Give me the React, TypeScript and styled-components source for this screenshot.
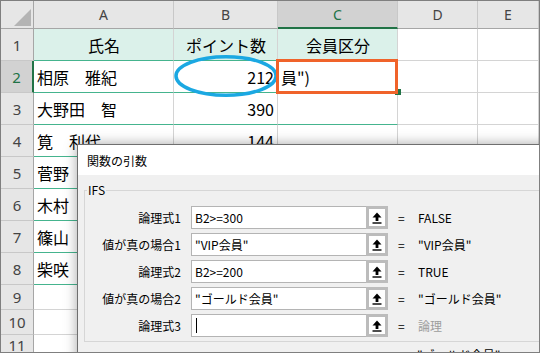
import React from 'react';
import styled, { createGlobalStyle } from 'styled-components';

const GlobalStyle = createGlobalStyle`
  html, body { margin: 0; padding: 0; background: #fff; }
  body {
    font-family: "Noto Sans CJK JP", "Noto Sans", sans-serif;
    overflow: hidden;
  }
`;

const Frame = styled.div`
  position: relative;
  width: 540px;
  height: 353px;
  box-sizing: border-box;
  border: 1px solid #7f7f7f;
  overflow: hidden;
  background: #fff;
`;

const Sheet = styled.div`
  display: grid;
  grid-template-columns: 33px 140px 104px 120px 80px 1fr;
  grid-template-rows: 28px repeat(8, 32px) 25px 25px 1fr;
  height: 100%;
`;

const Corner = styled.div`
  position: relative;
  box-sizing: border-box;
  background: #e6e6e6;
  border-right: 1px solid #a6a6a6;
  border-bottom: 1px solid #a6a6a6;

  &::after {
    content: '';
    position: absolute;
    right: 2px;
    bottom: 2px;
    width: 0;
    height: 0;
    border-left: 17px solid transparent;
    border-bottom: 17px solid #b4b4b4;
  }
`;

const ColHead = styled.div<{ $selected?: boolean }>`
  box-sizing: border-box;
  display: flex;
  align-items: center;
  justify-content: center;
  font-family: "Noto Sans", sans-serif;
  font-size: 14px;
  color: ${(p) => (p.$selected ? '#217346' : '#444')};
  background: ${(p) => (p.$selected ? '#d2d2d2' : '#e6e6e6')};
  border-right: 1px solid #c8c8c8;
  border-bottom: ${(p) => (p.$selected ? '2px solid #217346' : '1px solid #a6a6a6')};
`;

const RowHead = styled.div<{ $selected?: boolean }>`
  box-sizing: border-box;
  display: flex;
  align-items: center;
  justify-content: center;
  font-family: "Noto Sans", sans-serif;
  font-size: 15px;
  color: ${(p) => (p.$selected ? '#217346' : '#444')};
  background: ${(p) => (p.$selected ? '#d2d2d2' : '#e6e6e6')};
  border-right: ${(p) => (p.$selected ? '2px solid #217346' : '1px solid #a6a6a6')};
  border-bottom: 1px solid #c8c8c8;
`;

const Cell = styled.div<{ $head?: boolean; $table?: boolean; $align?: 'left' | 'right' | 'center' }>`
  box-sizing: border-box;
  display: flex;
  align-items: center;
  justify-content: ${(p) => (p.$align === 'right' ? 'flex-end' : p.$align === 'center' ? 'center' : 'flex-start')};
  padding: 0 3px 0 ${(p) => (p.$align === 'left' ? '3px' : '4px')};
  font-size: 16px;
  color: #000;
  white-space: nowrap;
  background: ${(p) => (p.$head ? '#dbf1ea' : '#fff')};
  border-right: 1px solid #d4d4d4;
  border-bottom: 1px solid ${(p) => (p.$table ? '#45b48e' : '#d4d4d4')};
`;

const Ellipse = styled.svg`
  position: absolute;
  left: 173px;
  top: 54px;
`;

const FillHandle = styled.div`
  position: absolute;
  left: 394px;
  top: 88px;
  width: 6px;
  height: 6px;
  background: #217346;
`;

const ActiveCell = styled.div`
  position: absolute;
  left: 275px;
  top: 58px;
  width: 122px;
  height: 35px;
  box-sizing: border-box;
  border: 3px solid #f0632a;
`;

const Dialog = styled.div`
  position: absolute;
  left: 76px;
  top: 143px;
  width: 480px;
  height: 240px;
  border: 1px solid #6f6f6f;
  background: #f0f0f0;
  box-shadow: 0 0 12px rgba(0, 0, 0, 0.35);
  font-size: 12px;
  color: #000;
`;

const TitleBar = styled.div`
  height: 30px;
  display: flex;
  align-items: center;
  padding-left: 9px;
  background: #fff;
`;

const Body = styled.div`
  padding: 8px 0 0 6px;
`;

const GroupBox = styled.fieldset`
  margin: 0;
  padding: 9px 0 4px 0;
  min-width: 0;
  border: 1px solid #d6d6d6;
`;

const Legend = styled.legend`
  margin-left: 2px;
  padding: 0 1px;
  line-height: 14px;
`;

const Fields = styled.div`
  display: grid;
  grid-template-columns: 106px 197px 30px 1fr;
  grid-auto-rows: 23px;
  row-gap: 4px;
  align-items: center;
  white-space: nowrap;
`;

const Label = styled.div`
  text-align: right;
  padding-right: 10px;
`;

const InputBox = styled.div`
  height: 23px;
  box-sizing: border-box;
  display: flex;
  align-items: center;
  border: 1px solid #b4b4b4;
  background: #fff;
`;

const InputText = styled.div`
  flex: 1;
  padding-left: 3px;
  display: flex;
  align-items: center;
`;

const Caret = styled.span`
  display: inline-block;
  width: 1px;
  height: 15px;
  margin-left: 1px;
  background: #000;
`;

const RefButton = styled.div`
  align-self: stretch;
  width: 22px;
  margin: -1px -1px -1px 0;
  box-sizing: border-box;
  border: 3px solid #bcbcbc;
  background: #fff;
  display: flex;
  align-items: center;
  justify-content: center;
`;

const Eq = styled.div`
  padding-left: 10px;
`;

const Result = styled.div<{ $muted?: boolean }>`
  color: ${(p) => (p.$muted ? '#9d9d9d' : '#000')};
`;

const Summary = styled(Fields)`
  margin-top: 4px;
  grid-auto-rows: 16px;
`;

const RefIcon = () => (
  <svg width="10" height="12" viewBox="0 0 10 12">
    <polygon points="5,0.5 9.5,5.5 0.5,5.5" fill="#000" />
    <rect x="3.6" y="5" width="2.8" height="4" fill="#000" />
    <rect x="0.5" y="10.3" width="9" height="1.4" fill="#000" />
  </svg>
);

const cols = ['A', 'B', 'C', 'D', 'E'];

const rows: { name: string; point: string; rank: string }[] = [
  { name: '氏名', point: 'ポイント数', rank: '会員区分' },
  { name: '相原　雅紀', point: '212', rank: '員")' },
  { name: '大野田　智', point: '390', rank: '' },
  { name: '筧　利代', point: '144', rank: '' },
  { name: '菅野', point: '', rank: '' },
  { name: '木村', point: '', rank: '' },
  { name: '篠山', point: '', rank: '' },
  { name: '柴咲', point: '', rank: '' },
];

const args = [
  { label: '論理式1', value: 'B2>=300', result: 'FALSE' },
  { label: '値が真の場合1', value: '"VIP会員"', result: '"VIP会員"' },
  { label: '論理式2', value: 'B2>=200', result: 'TRUE' },
  { label: '値が真の場合2', value: '"ゴールド会員"', result: '"ゴールド会員"' },
  { label: '論理式3', value: '', result: '論理', muted: true, caret: true },
];

const App: React.FunctionComponent = () => {
  return (
    <>
      <GlobalStyle />
      <Frame>
        <Sheet>
          <Corner />
          {cols.map((c) => (
            <ColHead key={c} $selected={c === 'C'}>
              {c}
            </ColHead>
          ))}

          {rows.map((r, i) => (
            <React.Fragment key={i}>
              <RowHead $selected={i === 1}>{i + 1}</RowHead>
              <Cell $table $head={i === 0} $align={i === 0 ? 'center' : 'left'}>
                {r.name}
              </Cell>
              <Cell $table $head={i === 0} $align={i === 0 ? 'center' : 'right'}>
                {r.point}
              </Cell>
              <Cell $table $head={i === 0} $align={i === 0 ? 'center' : 'left'}>
                {r.rank}
              </Cell>
              <Cell />
              <Cell />
            </React.Fragment>
          ))}

          {[9, 10, 11].map((n) => (
            <React.Fragment key={n}>
              <RowHead>{n}</RowHead>
              <Cell />
              <Cell />
              <Cell />
              <Cell />
              <Cell />
            </React.Fragment>
          ))}
        </Sheet>

        <Ellipse width="104" height="42" viewBox="0 0 104 42">
          <ellipse cx="52" cy="21" rx="50" ry="19.2" fill="none" stroke="#1ba8e2" strokeWidth="3.5" />
        </Ellipse>
        <FillHandle />
        <ActiveCell />

        <Dialog>
          <TitleBar>関数の引数</TitleBar>
          <Body>
            <GroupBox>
              <Legend>IFS</Legend>
              <Fields>
                {args.map((a) => (
                  <React.Fragment key={a.label}>
                    <Label>{a.label}</Label>
                    <InputBox>
                      <InputText>
                        {a.value}
                        {a.caret && <Caret />}
                      </InputText>
                      <RefButton>
                        <RefIcon />
                      </RefButton>
                    </InputBox>
                    <Eq>=</Eq>
                    <Result $muted={a.muted}>{a.result}</Result>
                  </React.Fragment>
                ))}
              </Fields>
            </GroupBox>
            <Summary>
              <div />
              <div />
              <Eq>=</Eq>
              <Result>"ゴールド会員"</Result>
            </Summary>
          </Body>
        </Dialog>
      </Frame>
    </>
  );
};

export default App;
